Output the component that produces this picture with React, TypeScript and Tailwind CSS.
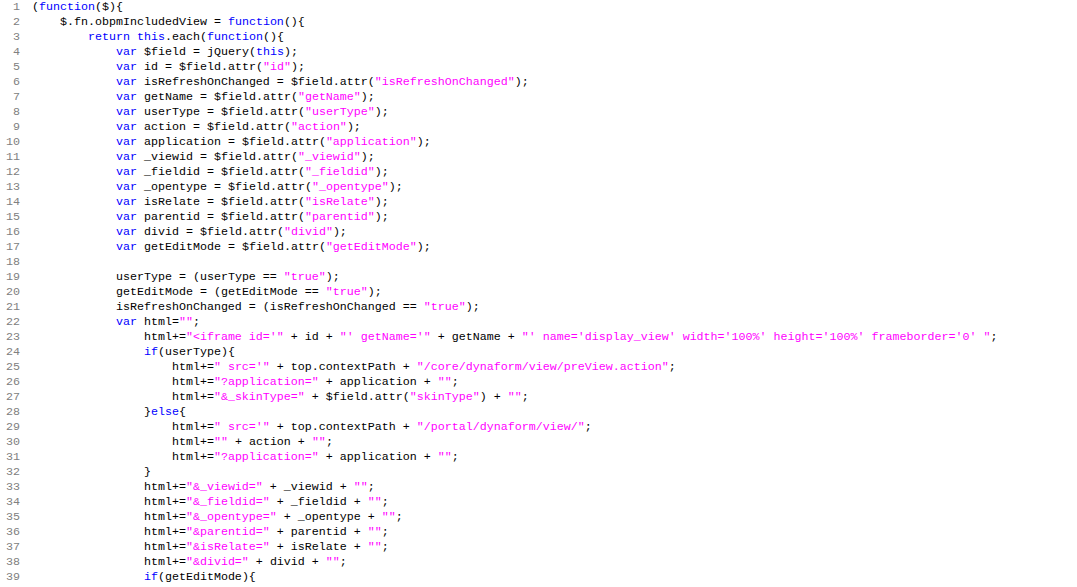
import React from "react";

const lines: string[] = [
  `(function($){`,
  `    $.fn.obpmIncludedView = function(){`,
  `        return this.each(function(){`,
  `            var $field = jQuery(this);`,
  `            var id = $field.attr("id");`,
  `            var isRefreshOnChanged = $field.attr("isRefreshOnChanged");`,
  `            var getName = $field.attr("getName");`,
  `            var userType = $field.attr("userType");`,
  `            var action = $field.attr("action");`,
  `            var application = $field.attr("application");`,
  `            var _viewid = $field.attr("_viewid");`,
  `            var _fieldid = $field.attr("_fieldid");`,
  `            var _opentype = $field.attr("_opentype");`,
  `            var isRelate = $field.attr("isRelate");`,
  `            var parentid = $field.attr("parentid");`,
  `            var divid = $field.attr("divid");`,
  `            var getEditMode = $field.attr("getEditMode");`,
  ``,
  `            userType = (userType == "true");`,
  `            getEditMode = (getEditMode == "true");`,
  `            isRefreshOnChanged = (isRefreshOnChanged == "true");`,
  `            var html="";`,
  `                html+="<iframe id='" + id + "' getName='" + getName + "' name='display_view' width='100%' height='100%' frameborder='0' ";`,
  `                if(userType){`,
  `                    html+=" src='" + top.contextPath + "/core/dynaform/view/preView.action";`,
  `                    html+="?application=" + application + "";`,
  `                    html+="&_skinType=" + $field.attr("skinType") + "";`,
  `                }else{`,
  `                    html+=" src='" + top.contextPath + "/portal/dynaform/view/";`,
  `                    html+="" + action + "";`,
  `                    html+="?application=" + application + "";`,
  `                }`,
  `                html+="&_viewid=" + _viewid + "";`,
  `                html+="&_fieldid=" + _fieldid + "";`,
  `                html+="&_opentype=" + _opentype + "";`,
  `                html+="&parentid=" + parentid + "";`,
  `                html+="&isRelate=" + isRelate + "";`,
  `                html+="&divid=" + divid + "";`,
  `                if(getEditMode){`,
];

const keywords = ["function", "return", "this", "var", "if", "else"];

type Token = { text: string; kind: "plain" | "keyword" | "string" };

// tiny js highlighter, only what this snippet needs
function tokenize(line: string): Token[] {
  const tokens: Token[] = [];
  const re = /("[^"]*")|([A-Za-z_$][A-Za-z0-9_$]*)|([^"A-Za-z_$]+)/g;
  let m: RegExpExecArray | null;
  while ((m = re.exec(line)) !== null) {
    if (m[1]) {
      tokens.push({ text: m[1], kind: "string" });
    } else if (m[2]) {
      tokens.push({
        text: m[2],
        kind: keywords.includes(m[2]) ? "keyword" : "plain",
      });
    } else {
      tokens.push({ text: m[3], kind: "plain" });
    }
  }
  return tokens;
}

function CodeLine({ number, code }: { number: number; code: string }) {
  return (
    <div className="flex h-[15px] items-center">
      <span className="w-[20px] shrink-0 text-right text-[#808080]">
        {number}
      </span>
      <span className="ml-[12px] whitespace-pre text-black">
        {tokenize(code).map((token, i) => (
          <span
            key={i}
            className={
              token.kind === "keyword"
                ? "text-[#0000ff]"
                : token.kind === "string"
                ? "text-[#ff00ff]"
                : ""
            }
          >
            {token.text}
          </span>
        ))}
      </span>
    </div>
  );
}

export default function App() {
  return (
    <div className="h-[587px] w-[1077px] overflow-hidden bg-white font-['Liberation_Mono','Courier_New',monospace] text-[11.67px] leading-[15px]">
      {lines.map((code, i) => (
        <CodeLine key={i} number={i + 1} code={code} />
      ))}
    </div>
  );
}
